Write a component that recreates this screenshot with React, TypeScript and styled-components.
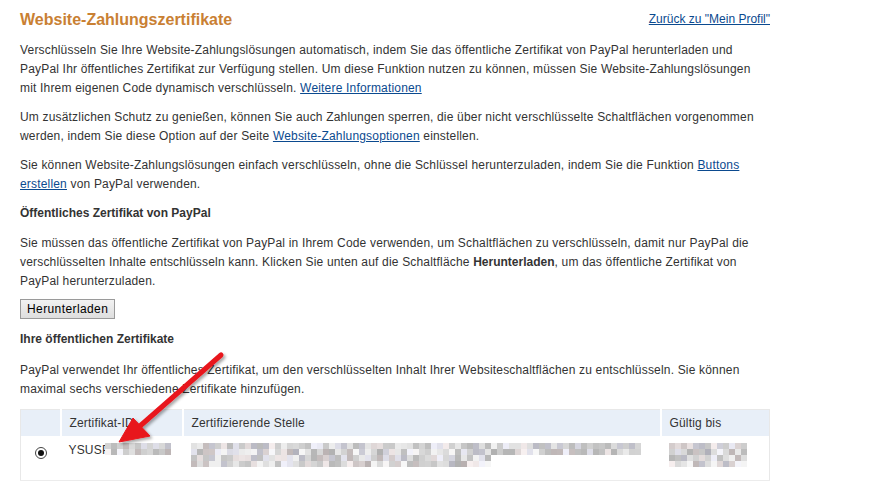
import React from "react";
import styled, { createGlobalStyle } from "styled-components";

const Global = createGlobalStyle`
  html, body { margin: 0; padding: 0; background: #fff; }
  body {
    font-family: Arial, "Liberation Sans", Helvetica, sans-serif;
    font-size: 12px;
    color: #333;
    letter-spacing: 0.18px;
  }
  b { letter-spacing: 0; }
`;

const Page = styled.div`
  position: relative;
  width: 750px;
  padding: 10px 0 0 20px;
`;

const Header = styled.div`
  display: flex;
  justify-content: space-between;
  align-items: flex-start;
`;

const Title = styled.h1`
  margin: 0;
  font-size: 16px;
  line-height: 20px;
  font-weight: bold;
  letter-spacing: 0;
  color: #c98033;
`;

const Link = styled.a`
  color: #0b4a8f;
  text-decoration: underline;
  cursor: pointer;
`;

const BackLink = styled(Link)`
  line-height: 18px;
  letter-spacing: 0;
`;

const Para = styled.p<{ $top?: number }>`
  margin: ${(p) => p.$top ?? 10}px 0 0 0;
  line-height: 19px;
`;

const Heading = styled.h3<{ $top?: number }>`
  margin: ${(p) => p.$top ?? 10}px 0 0 0;
  font-size: 12px;
  line-height: 19px;
  font-weight: bold;
  letter-spacing: 0;
`;

const Button = styled.button`
  display: block;
  margin-top: 8px;
  height: 20px;
  padding: 0 6px;
  font-family: Arial, "Liberation Sans", sans-serif;
  font-size: 12px;
  letter-spacing: 0.4px;
  color: #000;
  background: linear-gradient(#f2f2f2, #dedede);
  border: 1px solid #9a9a9a;
  border-radius: 0;
`;

const Table = styled.table`
  margin-top: 10px;
  width: 749px;
  border-collapse: collapse;
  border: 1px solid #e8e8e8;
  table-layout: fixed;
`;

const Th = styled.th<{ $w: number }>`
  box-sizing: border-box;
  width: ${(p) => p.$w}px;
  height: 26px;
  padding: 0 8px;
  background: #e8eff8;
  border-left: 2px solid #fff;
  text-align: left;
  font-weight: normal;
  font-size: 12px;
  color: #333;
  white-space: nowrap;
  &:first-child { border-left: none; }
`;

const Td = styled.td`
  box-sizing: border-box;
  height: 45px;
  padding: 7px 8px 0 8px;
  vertical-align: top;
  border-bottom: 1px solid #ececec;
  font-size: 12px;
  overflow: hidden;
`;

const Radio = styled.span`
  display: block;
  width: 10px;
  height: 10px;
  margin: 4px 0 0 6px;
  border: 1px solid #444;
  border-radius: 50%;
  position: relative;
  background: #fff;
  &::after {
    content: "";
    position: absolute;
    left: 2px;
    top: 2px;
    width: 6px;
    height: 6px;
    border-radius: 50%;
    background: #111;
  }
`;

const IdCell = styled.div`
  display: flex;
  align-items: flex-start;
  line-height: 14px;
`;

const MosaicBox = styled.div<{ $cols: number; $shift?: number }>`
  display: grid;
  grid-template-columns: repeat(${(p) => p.$cols}, 6px);
  grid-auto-rows: 6px;
  flex-shrink: 0;
  margin-left: ${(p) => p.$shift ?? 0}px;
`;

const Cell = styled.span``;

function rand(seed: number) {
  let s = seed;
  return () => {
    s = (s * 9301 + 49297) % 233280;
    return s / 233280;
  };
}

function Mosaic({ lines, seed, shift }: { lines: number[]; seed: number; shift?: number }) {
  const r = rand(seed);
  const maxW = Math.max(...lines);
  const cols = Math.ceil(maxW / 6);
  const cells: React.ReactNode[] = [];
  lines.forEach((lw, li) => {
    const c = Math.ceil(lw / 6);
    for (let row = 0; row < 2; row++) {
      for (let i = 0; i < cols; i++) {
        let color = "transparent";
        if (i < c) {
          const v = r();
          const g = Math.round(row === 0 ? 182 + v * 60 : 175 + v * 72);
          const tint = r();
          const rr = g + (tint > 0.8 ? 8 : 0);
          const bb = g + (tint < 0.2 ? 10 : 0);
          color = `rgb(${Math.min(rr, 247)},${g},${Math.min(bb, 250)})`;
        }
        cells.push(<Cell key={`${li}-${row}-${i}`} style={{ background: color }} />);
      }
    }
  });
  return <MosaicBox $cols={cols} $shift={shift}>{cells}</MosaicBox>;
}

const ArrowLayer = styled.svg`
  position: absolute;
  left: 100px;
  top: 340px;
  overflow: visible;
  pointer-events: none;
`;

function Arrow() {
  // coordinates relative to (100, 340) on the page
  return (
    <ArrowLayer width="140" height="110" viewBox="0 0 140 110">
      <defs>
        <filter id="sh" x="-30%" y="-30%" width="160%" height="160%">
          <feDropShadow dx="2" dy="2" stdDeviation="1.6" floodColor="#000" floodOpacity="0.35" />
        </filter>
      </defs>
      <g filter="url(#sh)" fill="#e8141c" stroke="#e8141c">
        <line x1="121" y1="15" x2="40" y2="86" strokeWidth="5" strokeLinecap="round" />
        <polygon points="19,102 33,78 50,96" strokeWidth="1" strokeLinejoin="round" />
      </g>
    </ArrowLayer>
  );
}

export default function App() {
  return (
    <>
      <Global />
      <Page>
        <Header>
          <Title>Website-Zahlungszertifikate</Title>
          <BackLink>Zurück zu "Mein Profil"</BackLink>
        </Header>
        <Para $top={11}>
          Verschlüsseln Sie Ihre Website-Zahlungslösungen automatisch, indem Sie das öffentliche Zertifikat von PayPal herunterladen und PayPal Ihr öffentliches Zertifikat zur Verfügung stellen. Um diese Funktion nutzen zu können, müssen Sie Website-Zahlungslösungen mit Ihrem eigenen Code dynamisch verschlüsseln. <Link>Weitere Informationen</Link>
        </Para>
        <Para>
          Um zusätzlichen Schutz zu genießen, können Sie auch Zahlungen sperren, die über nicht verschlüsselte Schaltflächen vorgenommen werden, indem Sie diese Option auf der Seite <Link>Website-Zahlungsoptionen</Link> einstellen.
        </Para>
        <Para>
          Sie können Website-Zahlungslösungen einfach verschlüsseln, ohne die Schlüssel herunterzuladen, indem Sie die Funktion <Link>Buttons erstellen</Link> von PayPal verwenden.
        </Para>
        <Heading>Öffentliches Zertifikat von PayPal</Heading>
        <Para $top={11}>
          Sie müssen das öffentliche Zertifikat von PayPal in Ihrem Code verwenden, um Schaltflächen zu verschlüsseln, damit nur PayPal die verschlüsselten Inhalte entschlüsseln kann. Klicken Sie unten auf die Schaltfläche <b>Herunterladen</b>, um das öffentliche Zertifikat von PayPal herunterzuladen.
        </Para>
        <Button>Herunterladen</Button>
        <Heading $top={11}>Ihre öffentlichen Zertifikate</Heading>
        <Para $top={12}>
          PayPal verwendet Ihr öffentliches Zertifikat, um den verschlüsselten Inhalt Ihrer Websiteschaltflächen zu entschlüsseln. Sie können maximal sechs verschiedene Zertifikate hinzufügen.
        </Para>
        <Table>
          <thead>
            <tr>
              <Th $w={40}></Th>
              <Th $w={122}>Zertifikat-ID</Th>
              <Th $w={478}>Zertifizierende Stelle</Th>
              <Th $w={109}>Gültig bis</Th>
            </tr>
          </thead>
          <tbody>
            <tr>
              <Td><Radio /></Td>
              <Td>
                <IdCell>
                  YSUSP
                  <Mosaic lines={[66]} seed={7} shift={-5} />
                </IdCell>
              </Td>
              <Td>
                <Mosaic lines={[450, 300]} seed={13} />
              </Td>
              <Td>
                <Mosaic lines={[78, 78]} seed={29} />
              </Td>
            </tr>
          </tbody>
        </Table>
        <Arrow />
      </Page>
    </>
  );
}
